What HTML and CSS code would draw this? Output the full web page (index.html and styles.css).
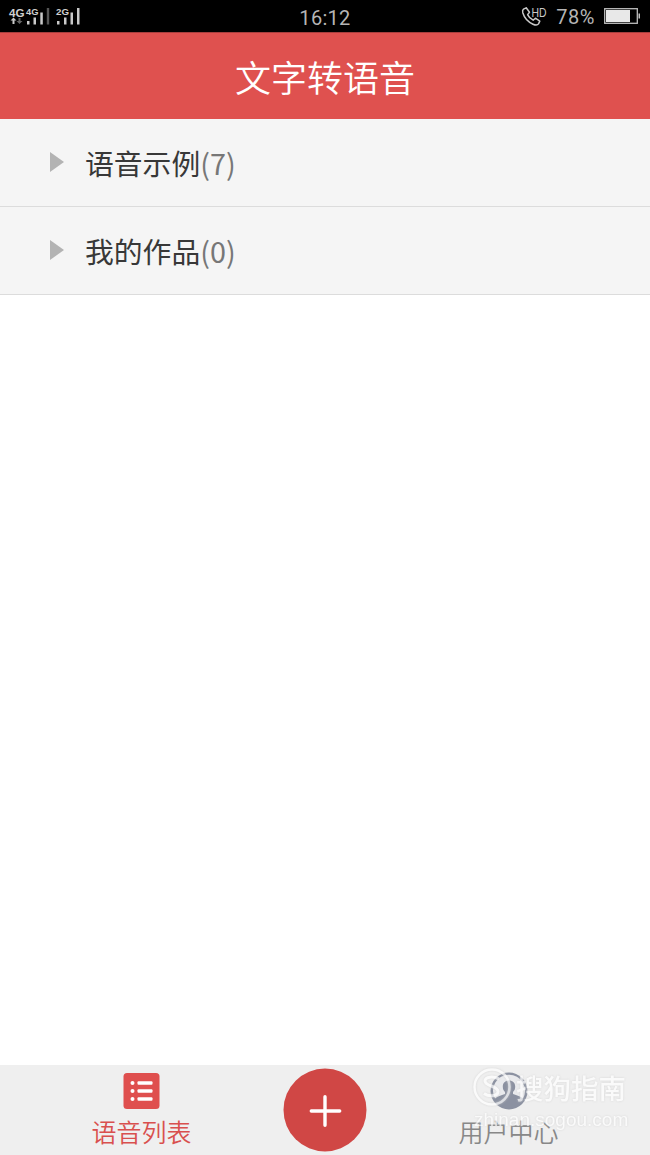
FILE: index.html
```html
<!DOCTYPE html>
<html lang="zh-CN">
<head>
    <meta charset="UTF-8">
    <meta name="viewport" content="width=device-width, initial-scale=1.0">
    <title>文字转语音</title>
    <link rel="stylesheet" href="styles.css">
</head>
<body>
<div class="app">
    <!-- 状态栏 -->
    <div class="status-bar">
        <svg class="signal" width="80" height="32" viewBox="0 0 80 32">
            <g class="signal-text">
                <text x="9" y="16.5" font-size="11" textLength="15.5" lengthAdjust="spacingAndGlyphs">4G</text>
                <text x="26" y="15" font-size="9.5" textLength="12.5" lengthAdjust="spacingAndGlyphs">4G</text>
                <text x="56" y="15" font-size="9.5" textLength="13" lengthAdjust="spacingAndGlyphs">2G</text>
            </g>
            <g fill="#c9c9c9">
                <path d="M13.5 17.5l3 3h-2V24h-2v-3.5h-2z"/>
                <path d="M19.5 24l-3-3h2v-3h2v3h2z" fill="#666"/>
                <path d="M27 21h2.5v3.5H27zM33.5 17.5H36v7h-2.5zM40.3 12.5h2.5v12h-2.5z"/>
                <path d="M46.8 8h2.4v16.5h-2.4z" fill="#555"/>
                <path d="M57 21h2.5v3.5H57zM64 17.5h2.5v7H64zM70.5 12.5H73v12h-2.5zM77 8h2.5v16.5H77z"/>
            </g>
        </svg>
        <span class="time">16:12</span>
        <div class="status-right">
            <svg class="call" width="28" height="32" viewBox="0 0 28 32">
                <path d="M2.5 9.2l2.7-1.4 3.3 4.4-1.9 2.4c1.3 2.7 2.9 4.3 5.5 5.6l2.3-2 4.4 3-1.3 2.7c-1 1.3-3 1.4-5.5.3C6.8 21.9 3.2 17.5 1.8 12.8c-.4-1.5-.2-2.9.7-3.6z" fill="none" stroke="#c9c9c9" stroke-width="1.5" stroke-linejoin="round"/>
                <text x="10.5" y="17" font-size="12" textLength="15" lengthAdjust="spacingAndGlyphs">HD</text>
            </svg>
            <span class="percent">78%</span>
            <svg class="battery" width="37" height="16" viewBox="0 0 37 16">
                <rect x=".7" y=".7" width="32.6" height="14.6" fill="none" stroke="#bdbdbd" stroke-width="1.3"/>
                <rect x="2" y="2" width="24" height="12" fill="#e8e8e8"/>
                <path d="M34.5 5.5H36v5h-1.5z" fill="#bdbdbd"/>
            </svg>
        </div>
    </div>

    <!-- 标题 -->
    <header class="header">
        <h1>文字转语音</h1>
    </header>

    <!-- 分组列表 -->
    <ul class="list">
        <li class="list-item">
            <span class="arrow"></span>
            <span class="name">语音示例</span><span class="count">(7)</span>
        </li>
        <li class="list-item">
            <span class="arrow"></span>
            <span class="name">我的作品</span><span class="count">(0)</span>
        </li>
    </ul>

    <!-- 底部导航 -->
    <nav class="tab-bar">
        <a class="tab active">
            <svg width="37" height="37" viewBox="0 0 37 37">
                <rect x=".5" y=".5" width="36" height="36" rx="3.5" fill="#df4f4e"/>
                <g fill="#fff">
                    <circle cx="9.5" cy="10.5" r="2"/>
                    <circle cx="9.5" cy="18.5" r="2"/>
                    <circle cx="9.5" cy="26.5" r="2"/>
                    <rect x="14.5" y="8.7" width="15" height="3.6" rx="1"/>
                    <rect x="14.5" y="16.7" width="15" height="3.6" rx="1"/>
                    <rect x="14.5" y="24.7" width="15" height="3.6" rx="1"/>
                </g>
            </svg>
            <span>语音列表</span>
        </a>
        <a class="add">
            <svg width="84" height="84" viewBox="0 0 84 84">
                <circle cx="42" cy="42" r="41.5" fill="#d04745"/>
                <path d="M42 28.7v28.6M28.3 43h28.4" stroke="#fff" stroke-width="3.4" stroke-linecap="round"/>
            </svg>
        </a>
        <a class="tab">
            <svg width="38" height="38" viewBox="0 0 38 38">
                <circle cx="19" cy="19" r="18.5" fill="#8b91a1"/>
                <path d="M5 26.5a16 16 0 1 1 28 0c-2.500-2.2-6-3-10-4.500v-2c1.500-1.500 2.200-3 2.200-5.500 0-3.500-2.400-6-6.200-6s-6.200 2.500-6.200 6c0 2.500.7 4 2.200 5.500v2c-4 1.500-7.500 2.300-10 4.500z" fill="#e9eaed"/>
            </svg>
            <span>用户中心</span>
        </a>

        <!-- 水印 -->
        <div class="watermark">
            <div class="brand">
                <svg width="40" height="40" viewBox="0 0 40 40" fill="none" stroke="#fff">
                    <circle cx="20" cy="20" r="17.5" stroke-width="2.5"/>
                    <path d="M27 12c-5-3-14-2.500-14 2 0 5.500 13 4.500 13 10.500 0 5-9 5.500-14 2" stroke-width="3"/>
                </svg>
                <span>搜狗指南</span>
            </div>
            <div class="site">zhinan.sogou.com</div>
        </div>
    </nav>
</div>
</body>
</html>
```

FILE: styles.css
```css
* {
    margin: 0;
    padding: 0;
    box-sizing: border-box;
}

body {
    font-family: "Noto Sans CJK SC", "Noto Sans", sans-serif;
    background: #fff;
    color: #383838;
}

.app {
    display: flex;
    flex-direction: column;
    height: 100vh;
    overflow: hidden;
}

/* 状态栏 */
.status-bar {
    display: grid;
    grid-template-columns: 1fr auto 1fr;
    align-items: center;
    height: 32px;
    background: #000;
    color: #b5b5b5;
    font-family: Roboto, sans-serif;
}

.status-bar svg {
    display: block;
}

.signal-text {
    fill: #d0d0d0;
    font-family: "Liberation Sans", sans-serif;
    font-weight: bold;
}

.time {
    font-size: 20px;
    letter-spacing: 0.3px;
    padding-top: 3px;
}

.status-right {
    display: flex;
    align-items: center;
    justify-content: flex-end;
    padding-right: 9px;
}

.call text {
    fill: #c9c9c9;
    font-family: "Liberation Sans", sans-serif;
}

.percent {
    font-size: 20px;
    letter-spacing: 0.5px;
    margin: 1px 9px 0 7px;
}

/* 标题栏 */
.header {
    display: flex;
    align-items: center;
    justify-content: center;
    height: 87px;
    background: #df514f;
    border-top: 1px solid #a83e3d;
    color: #fff;
}

.header h1 {
    font-size: 36px;
    font-weight: 350;
    line-height: 52px;
}

/* 列表 */
.list {
    flex: 1;
    list-style: none;
}

.list-item {
    display: flex;
    align-items: center;
    height: 88px;
    padding-left: 50px;
    background: #f5f5f5;
    border-bottom: 1px solid #dcdcdc;
}

.arrow {
    border-left: 14px solid #b3b3b3;
    border-top: 10px solid transparent;
    border-bottom: 10px solid transparent;
    margin-right: 21px;
    margin-bottom: 1px;
}

.name {
    font-size: 28.8px;
}

.count {
    font-size: 28.8px;
    color: #777;
}

/* 底部导航 */
.tab-bar {
    position: relative;
    display: grid;
    grid-template-columns: 283px 84px 283px;
    height: 90px;
    background: #efefef;
}

.tab {
    display: flex;
    flex-direction: column;
    align-items: center;
    padding-top: 7px;
    font-size: 25px;
    font-weight: 350;
    line-height: 36px;
    color: #888;
}

.tab svg {
    height: 38px;
}

.tab span {
    margin-top: 3px;
}

.tab.active {
    color: #d9504e;
}

.add {
    padding-top: 3px;
}

/* 水印浮在导航上方 */
.watermark {
    position: absolute;
    top: 1px;
    left: 472px;
    color: #fff;
    opacity: 0.7;
    filter: drop-shadow(0 0 1px #ccc);
    white-space: nowrap;
}

.brand {
    display: flex;
    align-items: center;
    height: 42px;
    font-size: 27.5px;
    font-weight: 500;
}

.brand span {
    margin-left: 4px;
}

.site {
    font-family: "Liberation Sans", sans-serif;
    font-size: 19px;
    line-height: 24px;
    padding-left: 2px;
}
```
